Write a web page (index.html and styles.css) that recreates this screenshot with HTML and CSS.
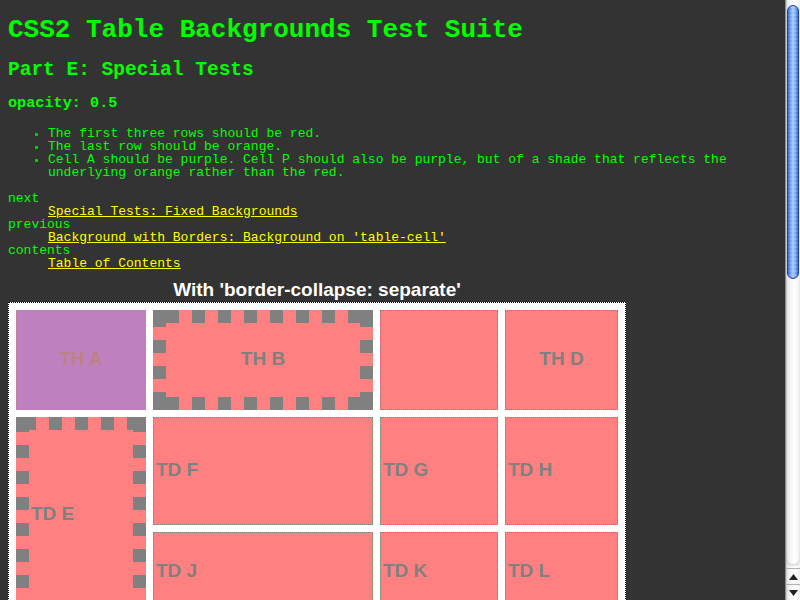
FILE: index.html
```html
<!DOCTYPE html>
<html>
<head>
<meta charset="utf-8">
<title>CSS2 Table Backgrounds Test Suite</title>
<link rel="stylesheet" href="styles.css">
</head>
<body>
<div class="window">
  <div class="page">
    <h1>CSS2 Table Backgrounds Test Suite</h1>
    <h2>Part E: Special Tests</h2>
    <h3>opacity: 0.5</h3>
    <ul>
      <li>The first three rows should be red.</li>
      <li>The last row should be orange.</li>
      <li>Cell A should be purple. Cell P should also be purple, but of a shade that reflects the underlying orange rather than the red.</li>
    </ul>
    <dl>
      <dt>next</dt>
      <dd><a href="#">Special Tests: Fixed Backgrounds</a></dd>
      <dt>previous</dt>
      <dd><a href="#">Background with Borders: Background on 'table-cell'</a></dd>
      <dt>contents</dt>
      <dd><a href="#">Table of Contents</a></dd>
    </dl>
    <table class="test">
      <caption>With 'border-collapse: separate'</caption>
      <colgroup>
        <col class="col-1"><col class="col-2"><col class="col-3"><col class="col-4">
      </colgroup>
      <tr class="row-1">
        <th class="cell-a">TH A</th>
        <th class="cell-b">TH B</th>
        <th></th>
        <th>TH D</th>
      </tr>
      <tr class="row-2">
        <td rowspan="2" class="cell-e">TD E</td>
        <td>TD F</td>
        <td>TD G</td>
        <td>TD H</td>
      </tr>
      <tr class="row-3">
        <td>TD J</td>
        <td>TD K</td>
        <td>TD L</td>
      </tr>
      <tr class="row-4">
        <td>TD M</td>
        <td>TD N</td>
        <td>TD O</td>
        <td class="cell-p">TD P</td>
      </tr>
    </table>
  </div>
  <div class="scrollbar">
    <div class="thumb"></div>
    <div class="track"></div>
    <div class="btn">
      <svg width="9" height="6" viewBox="0 0 9 6"><polygon points="4.5,0 9,6 0,6" fill="#222"/></svg>
    </div>
    <div class="btn">
      <svg width="9" height="6" viewBox="0 0 9 6"><polygon points="0,0 9,0 4.5,6" fill="#222"/></svg>
    </div>
  </div>
</div>
</body>
</html>
```
FILE: styles.css
```css
html, body {
  margin: 0;
  padding: 0;
  height: 100%;
  overflow: hidden;
  background: #333333;
}

.window {
  display: flex;
  height: 600px;
  width: 800px;
}

.page {
  flex: 1;
  min-width: 0;
  overflow: hidden;
  padding: 0 8px;
  color: #00ff00;
  font-family: "Liberation Mono", "Courier New", monospace;
  font-size: 13px;
  line-height: 1;
}

h1 {
  font-size: 26px;
  margin: 17.4px 0;
}

h2 {
  font-size: 19.5px;
  margin: 17.4px 0 16.2px;
}

h3 {
  font-size: 15.21px;
  margin: 15.21px 0;
}

ul {
  margin: 13px 0;
  padding-left: 40px;
  list-style: none;
}

ul li {
  position: relative;
}

ul li::before {
  content: "";
  position: absolute;
  left: -13px;
  top: 6px;
  width: 3px;
  height: 3px;
  border-radius: 1px;
  background: #00dd00;
}

dl {
  margin: 13px 0 10px;
}

dd {
  margin-left: 40px;
}

a {
  color: #ffff00;
  text-decoration: underline;
}

/* test table */
.test {
  table-layout: fixed;
  width: 618px;
  border: 1px dotted #000;
  background: #fff;
  border-spacing: 7px;
}

.test caption {
  font-family: "Liberation Sans", Arial, sans-serif;
  font-weight: bold;
  font-size: 19px;
  line-height: 19px;
  color: #fff;
  padding-bottom: 3px;
}

.col-1 { width: 130px; }
.col-2 { width: 220px; }
.col-3 { width: 118px; }
.col-4 { width: 113px; }

.row-1 { height: 100px; }
.row-2 { height: 108px; }
.row-3 { height: 81px; }
.row-4 { height: 81px; }

.test th,
.test td {
  background-color: #ff8080;
  border: 1px dotted #808080;
  padding: 0 2px 3px;
  color: #808080;
  font-family: "Liberation Sans", Arial, sans-serif;
  font-weight: bold;
  font-size: 19px;
  vertical-align: middle;
}

.test th { text-align: center; }
.test td { text-align: left; }

.test .cell-a {
  background-color: #bf80bf;
  color: #bd8282;
  border-color: #bd8282;
}

.test .row-4 td {
  background-color: #ffd280;
}

.test .row-4 .cell-p {
  background-color: #bf94bf;
}

/* thick dashed borders drawn as patterns */
.test .cell-b {
  border: 13px solid transparent;
  background-origin: border-box;
  background-clip: border-box;
  background-image:
    linear-gradient(#808080, #808080),
    linear-gradient(#808080, #808080),
    linear-gradient(#808080, #808080),
    linear-gradient(#808080, #808080),
    linear-gradient(to right, transparent 13px, #808080 13px),
    linear-gradient(to right, transparent 13px, #808080 13px),
    linear-gradient(to bottom, transparent 4px, #808080 4px, #808080 17px, transparent 17px),
    linear-gradient(to bottom, transparent 4px, #808080 4px, #808080 17px, transparent 17px);
  background-size:
    13px 13px, 13px 13px, 13px 13px, 13px 13px,
    26px 13px, 26px 13px,
    13px 26px, 13px 26px;
  background-position:
    0 0, 100% 0, 0 100%, 100% 100%,
    0 0, 0 100%,
    0 0, 100% 0;
  background-repeat:
    no-repeat, no-repeat, no-repeat, no-repeat,
    repeat-x, repeat-x,
    repeat-y, repeat-y;
}

.test .cell-e {
  border: 13px solid transparent;
  padding-left: 2px;
  background-origin: border-box;
  background-clip: border-box;
  background-image:
    linear-gradient(#808080, #808080),
    linear-gradient(#808080, #808080),
    linear-gradient(#808080, #808080),
    linear-gradient(#808080, #808080),
    linear-gradient(to right, transparent 7px, #808080 7px, #808080 20px, transparent 20px),
    linear-gradient(to right, transparent 7px, #808080 7px, #808080 20px, transparent 20px),
    linear-gradient(to bottom, transparent 2px, #808080 2px, #808080 15px, transparent 15px),
    linear-gradient(to bottom, transparent 2px, #808080 2px, #808080 15px, transparent 15px);
  background-size:
    13px 13px, 13px 13px, 13px 13px, 13px 13px,
    26px 13px, 26px 13px,
    13px 26px, 13px 26px;
  background-position:
    0 0, 100% 0, 0 100%, 100% 100%,
    0 0, 0 100%,
    0 0, 100% 0;
  background-repeat:
    no-repeat, no-repeat, no-repeat, no-repeat,
    repeat-x, repeat-x,
    repeat-y, repeat-y;
}

/* scrollbar */
.scrollbar {
  width: 15px;
  height: 600px;
  display: flex;
  flex-direction: column;
  background: linear-gradient(to right, #b8b8b8 0, #e4e4e4 1px, #f4f4f4 4px, #ffffff 9px, #ececec 15px);
  border-left: 1px solid #8c8c8c;
  box-sizing: border-box;
  padding-top: 5px;
}

.thumb {
  height: 272px;
  margin: 0 1px 0 1px;
  border-radius: 6px;
  border: 1px solid #1d3fa8;
  background:
    repeating-linear-gradient(to bottom, rgba(255,255,255,0.12) 0 2px, rgba(255,255,255,0) 2px 4px),
    linear-gradient(to right, #2e63d6 0, #6fa3ef 25%, #a8cdf8 50%, #78aaf0 75%, #3067d6 100%);
}

.track {
  flex: 1;
  margin: 0 0 2px;
  border-bottom-left-radius: 6px;
  border-bottom-right-radius: 6px;
  box-shadow: inset 0 -2px 2px rgba(0,0,0,0.12);
}

.btn {
  height: 16px;
  display: flex;
  align-items: center;
  justify-content: center;
  border-top: 1px solid #b0b0b0;
  box-sizing: border-box;
}
```
